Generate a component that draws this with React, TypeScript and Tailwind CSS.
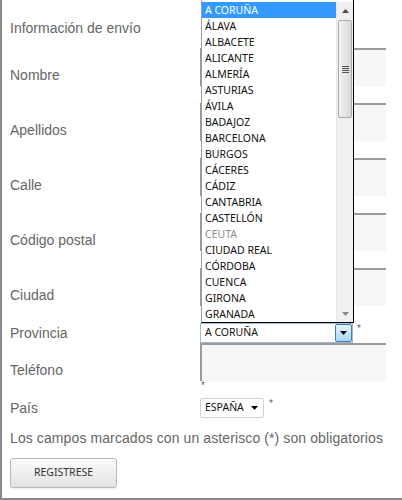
import React from 'react';

const provincias = [
  'A CORUÑA', 'ÁLAVA', 'ALBACETE', 'ALICANTE', 'ALMERÍA', 'ASTURIAS', 'ÁVILA',
  'BADAJOZ', 'BARCELONA', 'BURGOS', 'CÁCERES', 'CÁDIZ', 'CANTABRIA', 'CASTELLÓN',
  'CEUTA', 'CIUDAD REAL', 'CÓRDOBA', 'CUENCA', 'GIRONA', 'GRANADA',
];

function TextRow({ label, first }: { label: string; first?: boolean }) {
  return (
    <div className={first ? 'flex items-end mt-[12px]' : 'flex items-end mt-[17px]'}>
      <div className="w-[198px] pl-[8px] pb-[3px] leading-[16px]">{label}</div>
      <div className="h-[38px] w-[186px] border-l-2 border-t-2 border-[#9a9a9a] bg-[#f5f6f8]" />
    </div>
  );
}

function Caret({ className }: { className?: string }) {
  return (
    <svg width="7" height="4" viewBox="0 0 7 4" className={className}>
      <path d="M0 0h7L3.5 4z" fill="#000" />
    </svg>
  );
}

// open dropdown of the Provincia select
function ProvinciaList() {
  return (
    <div className="absolute left-[199px] top-0 flex h-[323px] w-[153px] border-b border-l border-r border-b-black border-l-[#9c9c9c] border-r-black bg-white pt-[2px] font-['Noto_Sans',sans-serif] text-[10.5px]">
      <ul className="flex-1">
        {provincias.map((p, i) => (
          <li
            key={p}
            className={
              'h-[16px] pl-[3px] leading-[16px] ' +
              (i === 0 ? 'bg-[#3399ff] text-white' : p === 'CEUTA' ? 'text-[#8a8a8a]' : 'text-[#111]')
            }
          >
            {p}
          </li>
        ))}
      </ul>
      {/* scrollbar */}
      <div className="flex w-[17px] flex-col bg-[#f0f0f0] border-l border-[#e8e8e8]">
        <div className="flex h-[17px] items-center justify-center">
          <svg width="7" height="4" viewBox="0 0 7 4"><path d="M0 4h7L3.5 0z" fill="#4a4a4a" /></svg>
        </div>
        <div className="mx-[1px] mt-[1px] flex h-[98px] items-center justify-center rounded-[2px] border border-[#a8a8a8] bg-gradient-to-r from-[#f3f3f3] to-[#d8d8d8]">
          <div className="flex flex-col gap-[1px]">
            <div className="h-[1px] w-[7px] bg-[#555]" />
            <div className="h-[1px] w-[7px] bg-[#555]" />
            <div className="h-[1px] w-[7px] bg-[#555]" />
            <div className="h-[1px] w-[7px] bg-[#555]" />
          </div>
        </div>
        <div className="flex-1" />
        <div className="flex h-[17px] items-center justify-center">
          <svg width="7" height="4" viewBox="0 0 7 4"><path d="M0 0h7L3.5 4z" fill="#8a8a8a" /></svg>
        </div>
      </div>
    </div>
  );
}

export default function App() {
  return (
    <div className="relative h-[500px] w-[402px] overflow-hidden border-b-2 border-l-2 border-[#888] bg-white font-['Liberation_Sans',Arial,sans-serif] text-[14px] text-[#666]">
      <div className="pl-[8px] pt-[20px] leading-[16px]">Información de envío</div>

      <TextRow label="Nombre" first />
      <TextRow label="Apellidos" />
      <TextRow label="Calle" />
      <TextRow label="Código postal" />
      <TextRow label="Ciudad" />

      {/* Provincia */}
      <div className="mt-[17px] flex items-center">
        <div className="w-[198px] pl-[8px] leading-[16px]">Provincia</div>
        <div className="flex h-[20px] w-[153px] items-center border border-[#9fb9d6] bg-white font-['Noto_Sans',sans-serif] text-[10.5px] text-[#111]">
          <span className="flex-1 pl-[4px]">A CORUÑA</span>
          <div className="flex h-[18px] w-[17px] items-center justify-center rounded-[2px] border border-[#3c7fb1] bg-gradient-to-b from-[#e5f4fc] to-[#a9d8f3]">
            <Caret />
          </div>
        </div>
        <span className="self-start pl-[4px] text-[10px] leading-[12px]">*</span>
      </div>

      {/* Teléfono */}
      <div className="flex">
        <div className="flex h-[38px] w-[198px] items-end pb-[3px] pl-[8px] leading-[16px]">Teléfono</div>
        <div className="flex flex-col">
          <div className="h-[38px] w-[186px] border-l-2 border-t-2 border-[#9a9a9a] bg-[#f5f6f8]" />
          <span className="pl-[1px] text-[10px] leading-[10px]">*</span>
        </div>
      </div>

      {/* País */}
      <div className="mt-[7px] flex items-center">
        <div className="w-[198px] pl-[8px] leading-[16px]">País</div>
        <div className="flex h-[20px] w-[64px] items-center rounded-[2px] border border-[#d0d0d0] bg-white font-['Noto_Sans',sans-serif] text-[10.5px] text-[#111]">
          <span className="flex-1 pl-[4px]">ESPAÑA</span>
          <Caret className="mr-[5px]" />
        </div>
        <span className="self-start pl-[5px] text-[10px] leading-[12px]">*</span>
      </div>

      <p className="mt-[12px] pl-[8px] leading-[16px] tracking-[0.1px]">Los campos marcados con un asterisco (*) son obligatorios</p>

      <div className="mt-[12px] pl-[8px]">
        <button className="h-[30px] w-[107px] rounded-[3px] border border-[#b8b8b8] bg-gradient-to-b from-[#fcfcfc] to-[#e2e2e2] font-['Noto_Sans',sans-serif] text-[10.5px] text-[#333] shadow-[0_1px_1px_rgba(0,0,0,0.08)]">
          REGISTRESE
        </button>
      </div>

      <ProvinciaList />
    </div>
  );
}
